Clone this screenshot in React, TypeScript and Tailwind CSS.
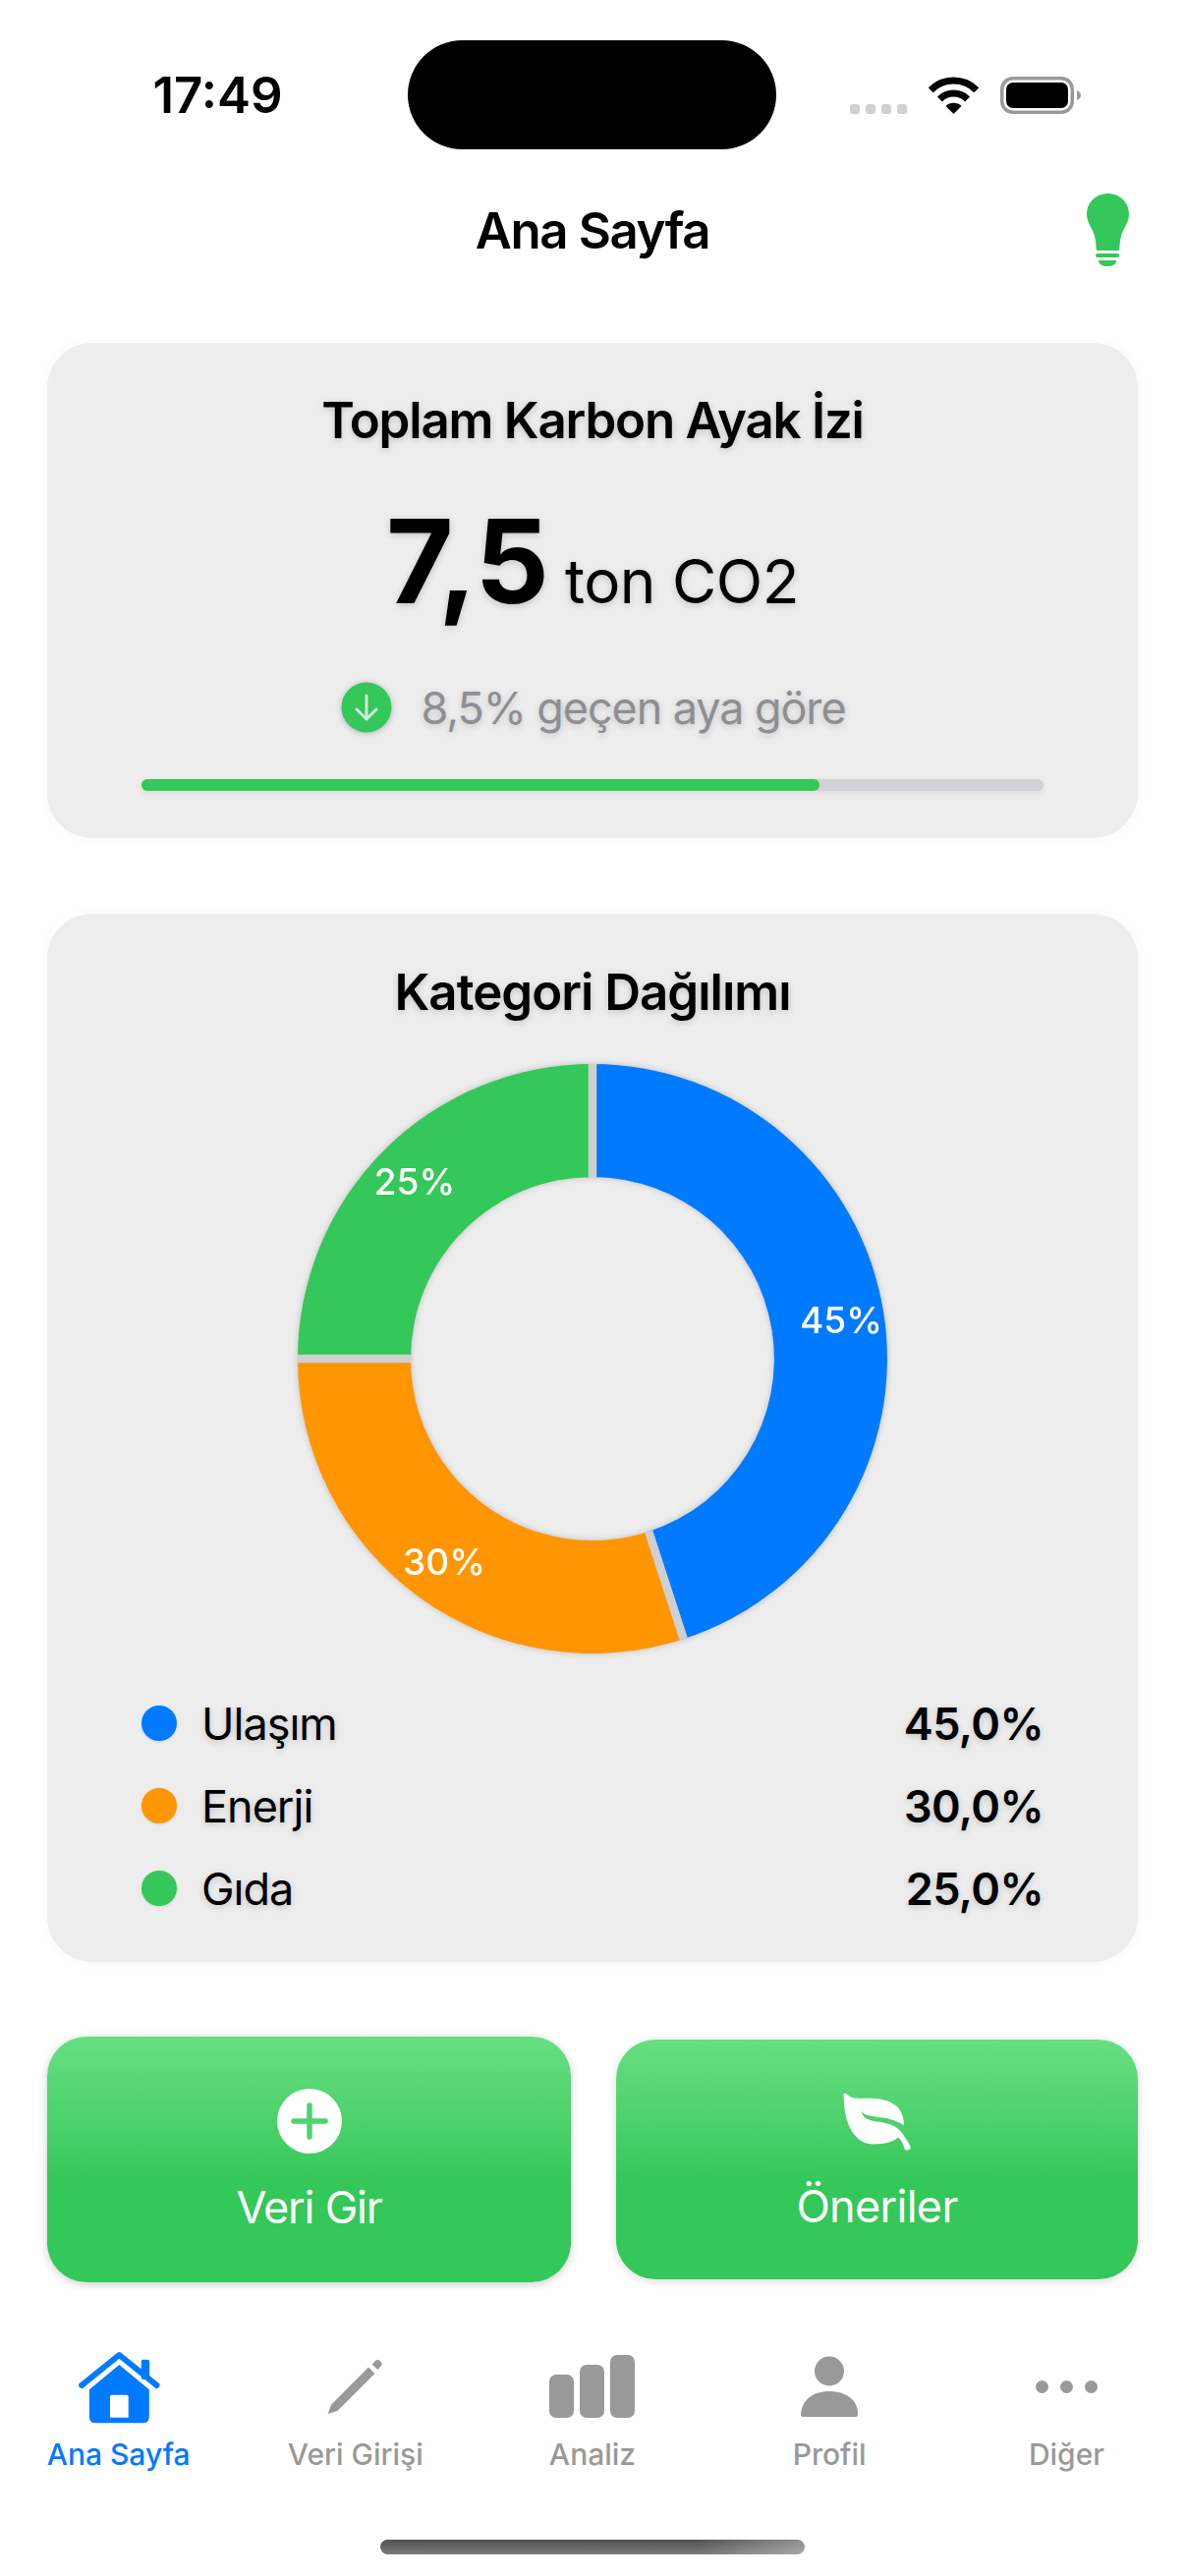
import { ReactNode } from "react"

const Wifi = () => (
  <svg width="51" height="38" viewBox="0 0 51 38" fill="none">
    <path d="M2.2 13.7A33 33 0 0 1 48.8 13.7" stroke="#000" strokeWidth="7" />
    <path d="M11.4 22.9A20 20 0 0 1 39.6 22.9" stroke="#000" strokeWidth="7" />
    <path d="M25.5 38L17.5 30A11.3 11.3 0 0 1 33.5 30Z" fill="#000" />
  </svg>
)

const Battery = () => (
  <svg width="82" height="38" viewBox="0 0 82 38">
    <rect x="1.75" y="1.75" width="71.5" height="34.5" rx="11" fill="none" stroke="#999" strokeWidth="3.5" />
    <rect x="6" y="6" width="63" height="26" rx="7" fill="#000" />
    <path d="M78 14C80.5 15 82 17 82 19C82 21 80.5 23 78 24Z" fill="#999" />
  </svg>
)

const Bulb = () => (
  <svg width="43" height="74" viewBox="0 0 43 74" fill="#34c759">
    <path d="M21.5 0C33.5 0 43 9 43 21C43 30 37 35 35 43C34 47 33.5 52 33 58H10C9.5 52 9 47 8 43C6 35 0 30 0 21C0 9 9.5 0 21.5 0Z" />
    <rect x="9" y="61" width="24" height="4" rx="2" />
    <path d="M12 68H30C30 72 26 74 21 74C16 74 12 72 12 68Z" />
  </svg>
)

const Leaf = () => (
  <svg width="73" height="62" viewBox="105 85 220 185" fill="#fff">
    <path d="M113 95C113 88 120 88 125 94C140 110 170 103 205 105C265 108 298 135 298 188C270 170 245 165 215 162C190 158 172 155 168 143C168 165 190 172 215 176C250 180 280 190 295 215C305 230 312 240 318 252C320 262 306 268 300 260C295 245 290 232 280 224C265 238 240 245 205 245C150 245 113 190 113 95Z" />
  </svg>
)

const Plus = () => (
  <svg width="66" height="66" viewBox="0 0 66 66">
    <circle cx="33" cy="33" r="33" fill="#fff" />
    <path d="M33 17V49M17 33H49" stroke="#4dd56f" strokeWidth="5.5" strokeLinecap="round" />
  </svg>
)

const HomeIcon = () => (
  <svg width="84" height="77" viewBox="110 60 250 230" fill="#007aff">
    <rect x="303" y="92" width="25" height="60" rx="5" />
    <path d="M122 170L236 78L350 170" fill="none" stroke="#007aff" strokeWidth="18" strokeLinecap="round" strokeLinejoin="round" />
    <path
      fillRule="evenodd"
      d="M236 108L327 183V265Q327 285 307 285H165Q145 285 145 265V183ZM213 200Q208 200 208 205V268H264V205Q264 200 259 200Z"
    />
  </svg>
)

const PencilIcon = () => (
  <svg width="59" height="58" viewBox="875 88 178 175" fill="#999">
    <path d="M880 260L890 232L1005 117L1024 136L910 250Z" />
    <path d="M1016 108L1026 96Q1032 91 1040 97Q1050 104 1044 112L1033 124Z" />
  </svg>
)

const BarsIcon = () => (
  <svg width="87" height="64" viewBox="0 0 87 64" fill="#999">
    <rect x="0" y="20" width="25" height="44" rx="7" />
    <rect x="31" y="10" width="25" height="54" rx="7" />
    <rect x="62" y="0" width="25" height="64" rx="7" />
  </svg>
)

const PersonIcon = () => (
  <svg width="58" height="62" viewBox="0 0 58 62" fill="#999">
    <circle cx="29" cy="15.5" r="15" />
    <path d="M0 62C0 45 12 36 29 36C46 36 58 45 58 58V60Q58 62 56 62H2Q0 62 0 60Z" />
  </svg>
)

const DotsIcon = () => (
  <svg width="63" height="13" viewBox="0 0 63 13" fill="#999">
    <circle cx="6.5" cy="6.5" r="6.5" />
    <circle cx="31.5" cy="6.5" r="6.5" />
    <circle cx="56.5" cy="6.5" r="6.5" />
  </svg>
)

// ring pieces, r 300 outer / 185 inner around 310,310
const Donut = () => (
  <svg width="620" height="620" viewBox="0 0 620 620" className="drop-shadow-[0_0_3px_rgba(0,0,0,0.2)]">
    <path d="M310 10A300 300 0 0 1 402.7 595.3L367.2 485.9A185 185 0 0 0 310 125Z" fill="#007aff" />
    <path d="M402.7 595.3A300 300 0 0 1 10 310H125A185 185 0 0 0 367.2 485.9Z" fill="#ff9500" />
    <path d="M10 310A300 300 0 0 1 310 10V125A185 185 0 0 0 125 310Z" fill="#34c759" />
    <path d="M310 10V125M10 310H125M402.7 595.3L367.2 485.9" stroke="#cfcfcf" strokeWidth="8.5" />
    <g fill="#fff" fontSize="37" fontWeight="500" textAnchor="middle" className="font-[Inter,sans-serif]">
      <text x="563" y="284">45%</text>
      <text x="159" y="530">30%</text>
      <text x="129" y="143">25%</text>
    </g>
  </svg>
)

const categories = [
  { name: "Ulaşım", value: "45,0%", color: "bg-[#007aff]" },
  { name: "Enerji", value: "30,0%", color: "bg-[#ff9500]" },
  { name: "Gıda", value: "25,0%", color: "bg-[#34c759]" },
]

const tabs: { name: string; icon: ReactNode; active?: boolean }[] = [
  { name: "Ana Sayfa", icon: <HomeIcon />, active: true },
  { name: "Veri Girişi", icon: <PencilIcon /> },
  { name: "Analiz", icon: <BarsIcon /> },
  { name: "Profil", icon: <PersonIcon /> },
  { name: "Diğer", icon: <DotsIcon /> },
]

const shadowText = "[text-shadow:0_2px_7px_rgba(0,0,0,0.18)]"

export default function App() {
  return (
    <div className="flex h-[2622px] w-[1206px] flex-col overflow-hidden bg-white font-[Inter,sans-serif] text-black">
      <div className="grid h-[152px] grid-cols-[415px_375px_1fr] pt-[41px]">
        <div className="flex h-[111px] items-center justify-center pl-[28px] text-[51px] font-semibold leading-none">
          17:49
        </div>
        <div className="h-[111px] rounded-[56px] bg-black" />
        <div className="flex items-start pl-[75px] pt-[37px]">
          <div className="mt-[28px] flex gap-[6px]">
            <span className="h-[10px] w-[10px] rounded-[3px] bg-[#d0d0d0]" />
            <span className="h-[10px] w-[10px] rounded-[3px] bg-[#d0d0d0]" />
            <span className="h-[10px] w-[10px] rounded-[3px] bg-[#d0d0d0]" />
            <span className="h-[10px] w-[10px] rounded-[3px] bg-[#d0d0d0]" />
          </div>
          <div className="ml-[22px]">
            <Wifi />
          </div>
          <div className="ml-[22px]">
            <Battery />
          </div>
        </div>
      </div>

      <header className="grid h-[164px] grid-cols-[1fr_auto_1fr] items-center">
        <div />
        <h1 className="text-[51px] font-semibold leading-none tracking-[-1.4px]">Ana Sayfa</h1>
        <div className="mr-[57px] justify-self-end">
          <Bulb />
        </div>
      </header>

      <main className="mt-[33px] flex flex-col px-[48px]">
        <section className="flex h-[504px] flex-col items-center rounded-[46px] bg-[#ededed] px-[96px] pt-[49px] shadow-[0_0_14px_rgba(0,0,0,0.035)]">
          <h2 className={`text-[51px] font-semibold leading-[60px] tracking-[-1.2px] ${shadowText}`}>
            Toplam Karbon Ayak İzi
          </h2>
          <div className={`mt-[43px] flex items-baseline gap-[17px] leading-[140px] ${shadowText}`}>
            <span className="text-[118px] font-bold tracking-[-1px]">7,5</span>
            <span className="text-[62px] tracking-[-0.5px]">ton CO2</span>
          </div>
          <div className="mt-[32px] flex h-[52px] items-center gap-[29px] pl-[2px]">
            <svg width="52" height="52" viewBox="0 0 52 52" className="drop-shadow-[0_1px_3px_rgba(0,0,0,0.25)]">
              <circle cx="26" cy="26" r="25.5" fill="#34c759" />
              <path d="M26 14V37M16 28L26 38L36 28" fill="none" stroke="#cdeed6" strokeWidth="3" strokeLinecap="round" strokeLinejoin="round" />
            </svg>
            <span className={`text-[45px] leading-none tracking-[-1.1px] text-[#8e8e93] ${shadowText}`}>
              8,5% geçen aya göre
            </span>
          </div>
          <div className="mt-[47px] h-[12px] w-full rounded-full bg-[#d1d1d6] shadow-[0_2px_6px_rgba(0,0,0,0.08)]">
            <div className="h-full w-[690px] rounded-full bg-[#34c759]" />
          </div>
        </section>

        <section className="mt-[77px] flex h-[1067px] flex-col items-center rounded-[46px] bg-[#ededed] px-[96px] pt-[50px] shadow-[0_0_14px_rgba(0,0,0,0.035)]">
          <h2 className={`text-[51px] font-semibold leading-[60px] tracking-[-1px] ${shadowText}`}>Kategori Dağılımı</h2>
          <div className="mt-[33px]">
            <Donut />
          </div>
          <ul className="mt-[19px] flex w-full flex-col">
            {categories.map((c) => (
              <li key={c.name} className="flex h-[84px] items-center justify-between">
                <div className="flex items-center gap-[25px]">
                  <span className={`h-[36px] w-[36px] rounded-full ${c.color} shadow-[0_1px_3px_rgba(0,0,0,0.12)]`} />
                  <span className={`text-[45px] leading-none tracking-[-1px] ${shadowText}`}>{c.name}</span>
                </div>
                <span className={`text-[45px] font-semibold leading-none tracking-[-0.6px] ${shadowText}`}>{c.value}</span>
              </li>
            ))}
          </ul>
        </section>

        <div className="mt-[76px] grid h-[250px] grid-cols-[533px_531px] items-center justify-between">
          <button className="flex h-[250px] flex-col items-center rounded-[40px] bg-gradient-to-b from-[#66df82] to-[#34c759] to-60% pt-[53px] text-white shadow-[0_2px_10px_rgba(0,0,0,0.2)]">
            <Plus />
            <span className="mt-[30px] text-[45px] leading-[50px] tracking-[-1.2px]">Veri Gir</span>
          </button>
          <button className="flex h-[244px] flex-col items-center rounded-[40px] bg-gradient-to-b from-[#66df82] to-[#34c759] to-60% pt-[53px] text-white shadow-[0_2px_10px_rgba(0,0,0,0.14)]">
            <Leaf />
            <span className="mt-[30px] text-[45px] leading-[50px] tracking-[-0.7px]">Öneriler</span>
          </button>
        </div>
      </main>

      <nav className="mt-[67px] grid grid-cols-5">
        {tabs.map((t) => (
          <div key={t.name} className="flex flex-col items-center">
            <div className="flex h-[78px] items-center">{t.icon}</div>
            <span className={`mt-[12px] text-[30px] font-medium leading-[36px] ${t.active ? "text-[#007aff]" : "text-[#999]"}`}>
              {t.name}
            </span>
          </div>
        ))}
      </nav>

      <div className="mt-[69px] flex justify-center">
        <div className="h-[15px] w-[432px] rounded-full bg-[linear-gradient(to_right,transparent_75%,rgba(255,255,255,0.35)),linear-gradient(to_bottom,#525252,#7a7a7a)]" />
      </div>
    </div>
  )
}
